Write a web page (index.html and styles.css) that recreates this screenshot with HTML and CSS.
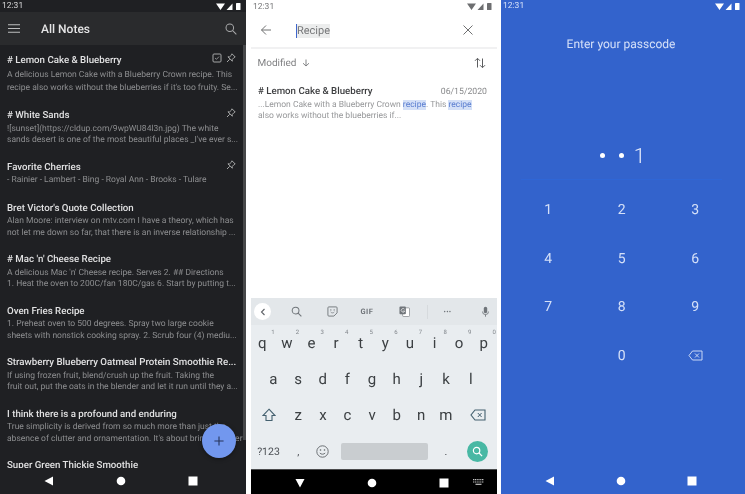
FILE: index.html
```html
<!DOCTYPE html>
<html lang="en">
<head>
  <meta charset="UTF-8" />
  <title>Notes screens</title>
  <link rel="stylesheet" href="styles.css">
</head>
<body>

<!-- all notes -->
<section class="phone dark">
  <div class="status">
    <span>12:31</span>
    <svg class="status-icons" viewBox="0 0 28 9"><path d="M1 1.500h9L5.500 8z M11.500 8l6-6.500V8z" fill="#fff"/><rect x="21" y="1" width="4.500" height="7" rx=".6" fill="#fff"/></svg>
  </div>
  <header class="notes-bar">
    <svg class="ico menu" viewBox="0 0 12 9"><path d="M0 .7h12M0 4.500h12M0 8.300h12" stroke="#bdbebf" stroke-width="1.100"/></svg>
    <h1>All Notes</h1>
    <svg class="ico" viewBox="0 0 13 13"><circle cx="5.200" cy="5.200" r="4.100" fill="none" stroke="#a9aaab" stroke-width="1.100"/><path d="M8.300 8.300l4 4" stroke="#a9aaab" stroke-width="1.100"/></svg>
  </header>
  <div class="notes">
    <article class="note first">
      <div class="note-marks">
        <svg class="mark" viewBox="0 0 10 10"><rect x="1" y="1" width="8" height="8" rx="1" fill="none" stroke="#a5a6a7"/><path d="M3 5l1.500 1.300L7 3.600" fill="none" stroke="#a5a6a7" stroke-width=".8"/></svg>
        <svg class="mark" viewBox="0 0 10 10"><path d="M6 .8l3.200 3.200-1.100.5-1.900 2 .1 1.700L1.900 3.800l1.700.1 2-1.900z M3.700 6.300L1 9" fill="none" stroke="#b4b5b6" stroke-width=".9"/></svg>
      </div>
      <h2># Lemon Cake &amp; Blueberry</h2>
      <p>A delicious Lemon Cake with a Blueberry Crown recipe. This<br>recipe also works without the blueberries if it's too fruity. Se...</p>
    </article>
    <article class="note">
      <div class="note-marks">
        <svg class="mark" viewBox="0 0 10 10"><path d="M6 .8l3.200 3.200-1.100.5-1.900 2 .1 1.700L1.900 3.800l1.700.1 2-1.900z M3.700 6.300L1 9" fill="none" stroke="#b4b5b6" stroke-width=".9"/></svg>
      </div>
      <h2># White Sands</h2>
      <p>![sunset](https://cldup.com/9wpWU84l3n.jpg) The white<br>sands desert is one of the most beautiful places _I've ever s...</p>
    </article>
    <article class="note single">
      <div class="note-marks">
        <svg class="mark" viewBox="0 0 10 10"><path d="M6 .8l3.200 3.200-1.100.5-1.900 2 .1 1.700L1.900 3.800l1.700.1 2-1.900z M3.700 6.300L1 9" fill="none" stroke="#b4b5b6" stroke-width=".9"/></svg>
      </div>
      <h2>Favorite Cherries</h2>
      <p>- Rainier - Lambert - Bing - Royal Ann - Brooks - Tulare</p>
    </article>
    <article class="note">
      <h2>Bret Victor's Quote Collection</h2>
      <p>Alan Moore: interview on mtv.com I have a theory, which has<br>not let me down so far, that there is an inverse relationship ...</p>
    </article>
    <article class="note">
      <h2># Mac 'n' Cheese Recipe</h2>
      <p>A delicious Mac 'n' Cheese recipe. Serves 2. ## Directions<br>1. Heat the oven to 200C/fan 180C/gas 6. Start by putting t...</p>
    </article>
    <article class="note">
      <h2>Oven Fries Recipe</h2>
      <p>1. Preheat oven to 500 degrees. Spray two large cookie<br>sheets with nonstick cooking spray. 2. Scrub four (4) mediu...</p>
    </article>
    <article class="note">
      <h2>Strawberry Blueberry Oatmeal Protein Smoothie Re...</h2>
      <p>If using frozen fruit, blend/crush up the fruit. Taking the<br>fruit out, put the oats in the blender and let it run until they a...</p>
    </article>
    <article class="note">
      <h2>I think there is a profound and enduring</h2>
      <p>True simplicity is derived from so much more than just the<br>absence of clutter and ornamentation. It's about bringing order</p>
    </article>
    <article class="note">
      <h2>Super Green Thickie Smoothie</h2>
    </article>
    <div class="scrollbar"></div>
  </div>
  <button class="fab"><svg viewBox="0 0 12 12"><path d="M6 .5v11M.5 6h11" stroke="#26355a" stroke-width="1.300"/></svg></button>
  <nav class="softkeys">
    <svg viewBox="0 0 10 10"><path d="M9 .5v9L.5 5z" fill="#fff"/></svg>
    <svg viewBox="0 0 10 10"><circle cx="5" cy="5" r="4.300" fill="#fff"/></svg>
    <svg viewBox="0 0 10 10"><rect x=".5" y=".5" width="9" height="9" fill="#fff"/></svg>
  </nav>
</section>

<!-- search -->
<section class="phone light">
  <div class="status">
    <span>12:31</span>
    <svg class="status-icons" viewBox="0 0 28 9"><path d="M1 1.500h9L5.500 8z M11.500 8l6-6.500V8z" fill="#6d6e70"/><rect x="21" y="1" width="4.500" height="7" rx=".6" fill="#6d6e70"/></svg>
  </div>
  <header class="search-bar">
    <svg class="ico" viewBox="0 0 12 12"><path d="M11 6H1.500M6 1.500L1.500 6 6 10.500" fill="none" stroke="#6f7071" stroke-width="1"/></svg>
    <div class="query"><span>Recipe</span></div>
    <svg class="ico" viewBox="0 0 12 12"><path d="M1.500 1.500l9 9M10.500 1.500l-9 9" stroke="#6f7071" stroke-width="1"/></svg>
  </header>
  <div class="sort-row">
    <span>Modified</span>
    <svg class="sort-arrow" viewBox="0 0 8 8"><path d="M4 .5v6.500M1 4.200L4 7l3-2.800" fill="none" stroke="#77787a" stroke-width=".9"/></svg>
    <svg class="sort-swap" viewBox="0 0 12 12"><path d="M3.500 10.500V1.500M1 3.800L3.500 1.300 6 3.800M8.500 1.500v9M6 8.200l2.500 2.500L11 8.200" fill="none" stroke="#5d5e60" stroke-width="1"/></svg>
  </div>
  <article class="result">
    <div class="result-head">
      <h2># Lemon Cake &amp; Blueberry</h2>
      <time>06/15/2020</time>
    </div>
    <p>...Lemon Cake with a Blueberry Crown <mark>recipe</mark>. This <mark>recipe</mark><br>also works without the blueberries if...</p>
  </article>

  <div class="keyboard">
    <div class="kb-tools">
      <span class="kb-back"><svg viewBox="0 0 6 8"><path d="M4.500 1L1.500 4l3 3" fill="none" stroke="#5f6368" stroke-width="1.100"/></svg></span>
      <svg class="kb-tool kb-find" viewBox="0 0 12 12"><circle cx="5" cy="5" r="3.700" fill="none" stroke="#70757a" stroke-width="1.100"/><path d="M7.800 7.800l3.500 3.500" stroke="#70757a" stroke-width="1.200"/></svg>
      <svg class="kb-tool kb-sticker" viewBox="0 0 12 12"><path d="M2 1h8a1 1 0 0 1 1 1v5.500L7.500 11H2a1 1 0 0 1-1-1V2a1 1 0 0 1 1-1z" fill="none" stroke="#70757a"/><path d="M4 6.500c1 1.300 3 1.300 4 0" fill="none" stroke="#70757a" stroke-width=".8"/><circle cx="4.200" cy="4.300" r=".7" fill="#70757a"/><circle cx="7.800" cy="4.300" r=".7" fill="#70757a"/></svg>
      <span class="kb-gif">GIF</span>
      <svg class="kb-tool kb-translate" viewBox="0 0 12 12"><rect x="4" y="2" width="7.500" height="9.500" rx="1" fill="#fff" stroke="#70757a" stroke-width=".7"/><rect x=".5" y=".5" width="7" height="8.500" rx="1" fill="#70757a"/><path d="M6 3.500a2 2 0 1 0 .3 2H4" fill="none" stroke="#fff" stroke-width=".7"/></svg>
      <i class="kb-sep"></i>
      <span class="kb-more">&bull;&bull;&bull;</span>
      <svg class="kb-tool kb-mic" viewBox="0 0 12 14"><rect x="4" y="1" width="4" height="7.500" rx="2" fill="#70757a"/><path d="M2.500 6.500a3.500 3.500 0 0 0 7 0M6 10v2.500" fill="none" stroke="#70757a"/></svg>
    </div>
    <div class="kb-row top">
      <b class="key"><sup>1</sup>q</b><b class="key"><sup>2</sup>w</b><b class="key"><sup>3</sup>e</b><b class="key"><sup>4</sup>r</b><b class="key"><sup>5</sup>t</b><b class="key"><sup>6</sup>y</b><b class="key"><sup>7</sup>u</b><b class="key"><sup>8</sup>i</b><b class="key"><sup>9</sup>o</b><b class="key"><sup>0</sup>p</b>
    </div>
    <div class="kb-row inset">
      <b class="key">a</b><b class="key">s</b><b class="key">d</b><b class="key">f</b><b class="key">g</b><b class="key">h</b><b class="key">j</b><b class="key">k</b><b class="key">l</b>
    </div>
    <div class="kb-row">
      <b class="key side-l"><svg class="kb-shift" viewBox="0 0 14 14"><path d="M7 1.200L13 7.500H10V12.500H4V7.500H1z" fill="none" stroke="#44606f" stroke-width="1.100"/></svg></b>
      <b class="key">z</b><b class="key">x</b><b class="key">c</b><b class="key">v</b><b class="key">b</b><b class="key">n</b><b class="key">m</b>
      <b class="key side-r"><svg class="kb-del" viewBox="0 0 16 12"><path d="M5 1h10v10H5L1 6z" fill="none" stroke="#44606f" stroke-width="1.100"/><path d="M7.800 4l3.800 4M11.600 4L7.800 8" stroke="#44606f" stroke-width="1"/></svg></b>
    </div>
    <div class="kb-row">
      <b class="key side-l small">?123</b>
      <b class="key small">,</b>
      <b class="key"><svg class="kb-emoji" viewBox="0 0 13 13"><circle cx="6.500" cy="6.500" r="5.700" fill="none" stroke="#5f6368" stroke-width=".9"/><circle cx="4.500" cy="5" r=".8" fill="#5f6368"/><circle cx="8.500" cy="5" r=".8" fill="#5f6368"/><path d="M3.800 8c1.200 1.600 4.200 1.600 5.400 0" fill="none" stroke="#5f6368" stroke-width=".9"/></svg></b>
      <i class="kb-space"></i>
      <b class="key small">.</b>
      <b class="key side-r"><span class="kb-go"><svg viewBox="0 0 12 12"><circle cx="5" cy="5" r="3.500" fill="none" stroke="#fff" stroke-width="1.300"/><path d="M7.700 7.700l3.300 3.300" stroke="#fff" stroke-width="1.400"/></svg></span></b>
    </div>
  </div>
  <nav class="softkeys black">
    <svg viewBox="0 0 10 10"><path d="M.5 1h9L5 9.500z" fill="#fff"/></svg>
    <svg viewBox="0 0 10 10"><circle cx="5" cy="5" r="4.300" fill="#fff"/></svg>
    <svg viewBox="0 0 10 10"><rect x=".5" y=".5" width="9" height="9" fill="#fff"/></svg>
    <svg class="kb-hide" viewBox="0 0 11 7"><path d="M0 .7h11M0 3h11" stroke="#c4c4c4" stroke-width="1.200" stroke-dasharray="1.200 .6"/><path d="M2.500 5.300h6" stroke="#c4c4c4" stroke-width="1.200"/></svg>
  </nav>
</section>

<!-- passcode -->
<section class="phone blue">
  <div class="status">
    <span>12:31</span>
    <svg class="status-icons" viewBox="0 0 28 9"><path d="M1 1.500h9L5.500 8z M11.500 8l6-6.500V8z" fill="#fff"/><rect x="21" y="1" width="4.500" height="7" rx=".6" fill="#fff"/></svg>
  </div>
  <div class="pass-title">Enter your passcode</div>
  <div class="pass-entry"><i></i><i></i><span>1</span></div>
  <div class="pass-line"></div>
  <div class="pad">
    <span>1</span><span>2</span><span>3</span>
    <span>4</span><span>5</span><span>6</span>
    <span>7</span><span>8</span><span>9</span>
    <span></span><span>0</span>
    <span><svg viewBox="0 0 15 11"><path d="M4.500 1H14v9H4.500L1 5.500z" fill="none" stroke="#c9d7f5" stroke-width="1"/><path d="M7 3.500l4 4M11 3.500l-4 4" stroke="#c9d7f5" stroke-width="1"/></svg></span>
  </div>
  <nav class="softkeys">
    <svg viewBox="0 0 10 10"><path d="M9 .5v9L.5 5z" fill="#fff"/></svg>
    <svg viewBox="0 0 10 10"><circle cx="5" cy="5" r="4.300" fill="#fff"/></svg>
    <svg viewBox="0 0 10 10"><rect x=".5" y=".5" width="9" height="9" fill="#fff"/></svg>
  </nav>
</section>

</body>
</html>
```

FILE: styles.css
```css
html, body {
  margin: 0;
  height: 494px;
  overflow: hidden;
  background: #fff;
}
body {
  display: flex;
  gap: 5px;
  width: 745px;
  font-family: Roboto, sans-serif;
  text-rendering: geometricPrecision;
}
.phone {
  position: relative;
  display: flex;
  flex-direction: column;
  width: 246px;
  height: 494px;
  flex: none;
  overflow: hidden;
  filter: blur(0.35px);
}
.dark { background: #1f2023; }
.light { background: #fff; }
.blue { background: #3363cc; width: 244px; margin-left: -1px; }

/* status bar */
.status {
  display: flex;
  justify-content: space-between;
  align-items: center;
  height: 12px;
  flex: none;
  padding: 0 3px 0 2px;
  font-size: 8.5px;
  color: #d6d6d7;
}
.status-icons { width: 28px; height: 9px; }
.light .status { color: #77787a; height: 13px; }
.blue .status { color: #d5e0f8; }

/* all notes */
.notes-bar {
  display: flex;
  align-items: center;
  height: 33px;
  flex: none;
  padding: 0 9px 0 8px;
  background: #2a2b2d;
  color: #e4e4e5;
}
.notes-bar h1 {
  flex: 1;
  margin: 0 0 0 21px;
  font-size: 12px;
  font-weight: 500;
}
.ico { width: 12px; height: 12px; flex: none; }
.menu { height: 9px; }
.notes {
  position: relative;
  flex: 1;
  overflow: hidden;
  padding: 10px 7px 0;
}
.note { position: relative; height: 51.5px; }
.note.first { height: 55px; }
.note.single { height: 41px; }
.note h2 {
  margin: 0;
  font-size: 9.7px;
  line-height: 12px;
  font-weight: 500;
  color: #e2e2e3;
  white-space: nowrap;
}
.note p {
  margin: 1.5px 0 0;
  font-size: 8.5px;
  line-height: 11.5px;
  color: #8d8e90;
  white-space: nowrap;
}
.note.first p { line-height: 13.5px; }
.note-marks {
  position: absolute;
  top: -2px;
  right: 3px;
  display: flex;
  gap: 4px;
}
.mark { width: 10px; height: 10px; }
.scrollbar {
  position: absolute;
  top: 0;
  right: 0;
  width: 3px;
  height: 395px;
  background: #47484a;
}
.fab {
  position: absolute;
  left: 202px;
  top: 424px;
  width: 34px;
  height: 34px;
  padding: 12px;
  border: 0;
  border-radius: 50%;
  background: #7297ee;
  box-shadow: 0 1px 4px rgba(0,0,0,0.4);
}
.fab svg { display: block; }

/* soft keys */
.softkeys {
  position: relative;
  display: flex;
  justify-content: space-between;
  align-items: center;
  height: 26px;
  flex: none;
  padding: 0 48px 0 44px;
}
.softkeys svg { width: 10px; height: 10px; }
.softkeys.black { background: #000; height: 25px; }
.softkeys svg.kb-hide {
  position: absolute;
  right: 13px;
  top: 9px;
  width: 11px;
  height: 7px;
}

/* search */
.search-bar {
  display: flex;
  align-items: center;
  height: 34px;
  flex: none;
  padding: 0 23px 0 9px;
  border-bottom: 2px solid #f1f1f2;
}
.query {
  flex: 1;
  margin-left: 24px;
  padding-top: 1px;
  font-size: 11px;
  color: #77787a;
}
.query span {
  display: inline-block;
  background: #eceded;
  border-left: 1px solid #3f66cc;
  line-height: 14px;
}
.sort-row {
  position: relative;
  display: flex;
  align-items: center;
  height: 28px;
  flex: none;
  padding: 0 11px 0 6.5px;
  font-size: 10px;
  color: #808183;
}
.sort-arrow { width: 8px; height: 8px; margin-left: 5px; }
.sort-swap { width: 12px; height: 12px; margin-left: auto; }
.result { padding: 9px 7px 0; height: 221px; box-sizing: border-box; flex: none; }
.result-head {
  display: flex;
  justify-content: space-between;
  align-items: center;
}
.result h2 {
  margin: 0;
  font-size: 9.7px;
  line-height: 12px;
  font-weight: 500;
  color: #3d3e40;
}
.result time { margin-right: 3px; font-size: 8.7px; color: #87888a; }
.result p {
  margin: 2px 0 0;
  font-size: 8.5px;
  line-height: 11px;
  color: #97989a;
  white-space: nowrap;
}
.result mark { background: #d4e0f7; color: #5b7ed0; }

/* keyboard */
.keyboard {
  flex: 1;
  display: flex;
  flex-direction: column;
  background: #e9edf0;
  border-bottom: 1px solid #4a4b4c;
}
.kb-tools {
  display: flex;
  align-items: center;
  height: 27px;
  flex: none;
  background: #e3e7ea;
}
.kb-back {
  display: flex;
  align-items: center;
  justify-content: center;
  width: 17px;
  height: 17px;
  margin-left: 3px;
  border-radius: 50%;
  background: #fff;
}
.kb-back svg { width: 6px; height: 8px; }
.kb-tool { width: 11px; height: 11px; flex: none; }
.kb-find { margin-left: 19.5px; }
.kb-sticker { margin-left: 25px; }
.kb-gif {
  width: 15px;
  margin-left: 23px;
  font-size: 7.5px;
  font-weight: 700;
  letter-spacing: 0.5px;
  color: #70757a;
}
.kb-translate { margin-left: 23.5px; }
.kb-sep { width: 1px; height: 14px; margin-left: 16.5px; background: #d6dadd; }
.kb-more { width: 11px; margin-left: 16px; font-size: 7px; color: #70757a; letter-spacing: 0.3px; }
.kb-mic { height: 12px; margin-left: 25px; }
.kb-row {
  display: flex;
  align-items: center;
  height: 36px;
  flex: none;
}
.kb-row.inset { padding: 0 14px 0 10px; }
.kb-row.top .key { padding-right: 2px; }
.key {
  position: relative;
  flex: 1 1 0;
  text-align: center;
  font-weight: 400;
  font-size: 15px;
  color: #3c4043;
}
.key.side-l { flex: 0 0 35px; display: flex; justify-content: center; align-items: center; }
.key.side-r { flex: 0 0 39px; display: flex; justify-content: center; align-items: center; }
.key.small { font-size: 10.5px; color: #4d5156; }
.key sup {
  position: absolute;
  top: -5px;
  right: 1px;
  font-size: 6px;
  line-height: 8px;
  color: #83888d;
}
.kb-shift { width: 14px; height: 14px; }
.kb-del { width: 16px; height: 12px; }
.kb-emoji { width: 13px; height: 13px; display: block; margin: auto; }
.kb-space { width: 87px; height: 17px; flex: none; margin: 0 6px; background: #c9cdd0; border-radius: 2px; }
.kb-go {
  display: flex;
  align-items: center;
  justify-content: center;
  width: 21px;
  height: 21px;
  border-radius: 50%;
  background: #48b8a4;
}
.kb-go svg { width: 11px; height: 11px; }

/* passcode */
.pass-title {
  margin-top: 25px;
  padding-right: 4px;
  text-align: center;
  font-size: 12px;
  line-height: 14px;
  color: #d5e0f8;
}
.pass-entry {
  display: flex;
  justify-content: center;
  align-items: center;
  gap: 13.5px;
  height: 24px;
  margin-top: 92px;
  padding-right: 4px;
  color: #e6ecfb;
  font-size: 21px;
  font-weight: 300;
}
.pass-entry i { width: 5px; height: 5px; border-radius: 50%; background: #fff; }
.pass-entry span { display: flex; justify-content: center; width: 5px; padding-top: 3px; }
.pass-line { height: 1px; margin: 12px 23px 0 20px; background: #2f66d6; }
.pad {
  display: grid;
  grid-template-columns: repeat(3, 73.5px);
  grid-auto-rows: 48.7px;
  justify-content: center;
  align-items: center;
  justify-items: center;
  flex: 1;
  margin-top: 5.5px;
  padding-right: 2.5px;
  font-size: 14px;
  color: #d5e0f8;
}
.pad svg { display: block; width: 15px; height: 11px; }
```
